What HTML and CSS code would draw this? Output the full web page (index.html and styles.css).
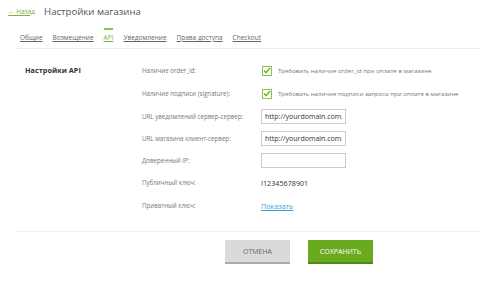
FILE: index.html
```html
<!DOCTYPE html>
<html lang="ru">
<head>
<meta charset="UTF-8">
<meta name="viewport" content="width=device-width, initial-scale=1.0">
<title>Настройки магазина</title>
<link rel="stylesheet" href="styles.css">
</head>
<body>
<header class="top">
  <a class="back" href="#">&larr; Назад</a>
  <h1>Настройки магазина</h1>
</header>

<nav class="tabs">
  <a href="#">Общие</a>
  <a href="#">Возмещение</a>
  <a href="#" class="active">API</a>
  <a href="#">Уведомление</a>
  <a href="#">Права доступа</a>
  <a href="#">Checkout</a>
</nav>

<section class="settings">
  <h2>Настройки API</h2>
  <div class="rows">
    <div class="row">
      <label>Наличие order_id:</label>
      <div class="check"><span class="box"><svg width="8" height="7" viewBox="0 0 8 7"><path d="M1 3.6 L3 5.6 L7 1" fill="none" stroke="#6fae2b" stroke-width="1.4"/></svg></span>Требовать наличие order_id при оплате в магазине</div>
    </div>
    <div class="row">
      <label>Наличие подписи (signature):</label>
      <div class="check"><span class="box"><svg width="8" height="7" viewBox="0 0 8 7"><path d="M1 3.6 L3 5.6 L7 1" fill="none" stroke="#6fae2b" stroke-width="1.4"/></svg></span>Требовать наличие подписи запроса при оплате в магазине</div>
    </div>
    <div class="row row-input">
      <label>URL уведомлений сервер-сервер:</label>
      <input type="text" value="http://yourdomain.com/">
    </div>
    <div class="row row-input">
      <label>URL магазина клиент-сервер:</label>
      <input type="text" value="http://yourdomain.com/">
    </div>
    <div class="row row-input">
      <label>Доверенный IP:</label>
      <input type="text" value="">
    </div>
    <div class="row">
      <label>Публичный ключ:</label>
      <span class="value">I12345678901</span>
    </div>
    <div class="row">
      <label>Приватный ключ:</label>
      <a class="show" href="#">Показать</a>
    </div>
  </div>
</section>

<div class="actions">
  <button class="btn cancel" type="button">Отмена</button>
  <button class="btn save" type="submit">Сохранить</button>
</div>
</body>
</html>
```

FILE: styles.css
```css
body {
  font-family: 'Open Sans', 'Noto Sans', sans-serif;
  margin: 0;
  padding: 0;
  background-color: #ffffff;
  color: #333;
}

.top {
  display: flex;
  align-items: center;
  gap: 9px;
  height: 22px;
  padding: 0 8px;
}

.back {
  color: #7cb342;
  font-size: 6.5px;
  text-decoration: underline;
}

h1 {
  margin: 0;
  font-size: 9.6px;
  font-weight: normal;
  color: #555;
}

.tabs {
  display: flex;
  gap: 10px;
  margin: 6px 0 0 16px;
  padding-left: 4px;
  border-bottom: 1px solid #ececec;
}

.tabs a {
  font-size: 6.5px;
  color: #666;
  text-decoration: underline;
  padding: 3px 0 6px;
  border-top: 2px solid transparent;
}

.tabs a.active {
  color: #7cb342;
  border-top-color: #8bc34a;
}

.settings {
  display: flex;
  padding: 10px 0 0 25px;
}

h2 {
  width: 117px;
  margin: 6px 0 0;
  font-size: 7.3px;
  font-weight: bold;
  color: #333;
}

.rows {
  display: flex;
  flex-direction: column;
}

.row {
  display: flex;
  align-items: center;
  height: 23px;
}

.row-input {
  height: 22px;
}

.row label {
  width: 119px;
  font-size: 6.2px;
  color: #777;
}

.check {
  display: flex;
  align-items: center;
  font-size: 6.1px;
  color: #777;
}

.box {
  display: flex;
  align-items: center;
  justify-content: center;
  width: 8px;
  height: 8px;
  border: 1px solid #8bc34a;
  margin: 0 6px 0 1px;
}

input[type="text"] {
  box-sizing: border-box;
  width: 85px;
  height: 15px;
  padding: 0 3px;
  border: 1px solid #ccc;
  font-family: 'Open Sans', sans-serif;
  font-size: 7px;
  color: #333;
}

.value {
  font-size: 7.2px;
  color: #333;
}

.show {
  font-size: 7.2px;
  color: #3a9fd6;
  text-decoration: underline;
}

.actions {
  display: flex;
  gap: 18px;
  margin: 14px 0 0 16px;
  padding: 8px 0 0 209px;
  border-top: 1px solid #f0f0f0;
}

.btn {
  width: 65px;
  height: 24px;
  border: none;
  font-family: 'Open Sans', sans-serif;
  font-size: 7px;
  text-transform: uppercase;
  cursor: pointer;
}

.cancel {
  background-color: #dadada;
  border-bottom: 2px solid #aaa;
  color: #666;
}

.save {
  background-color: #6aaa1e;
  border-bottom: 2px solid #4f8a14;
  color: #fff;
}
```
